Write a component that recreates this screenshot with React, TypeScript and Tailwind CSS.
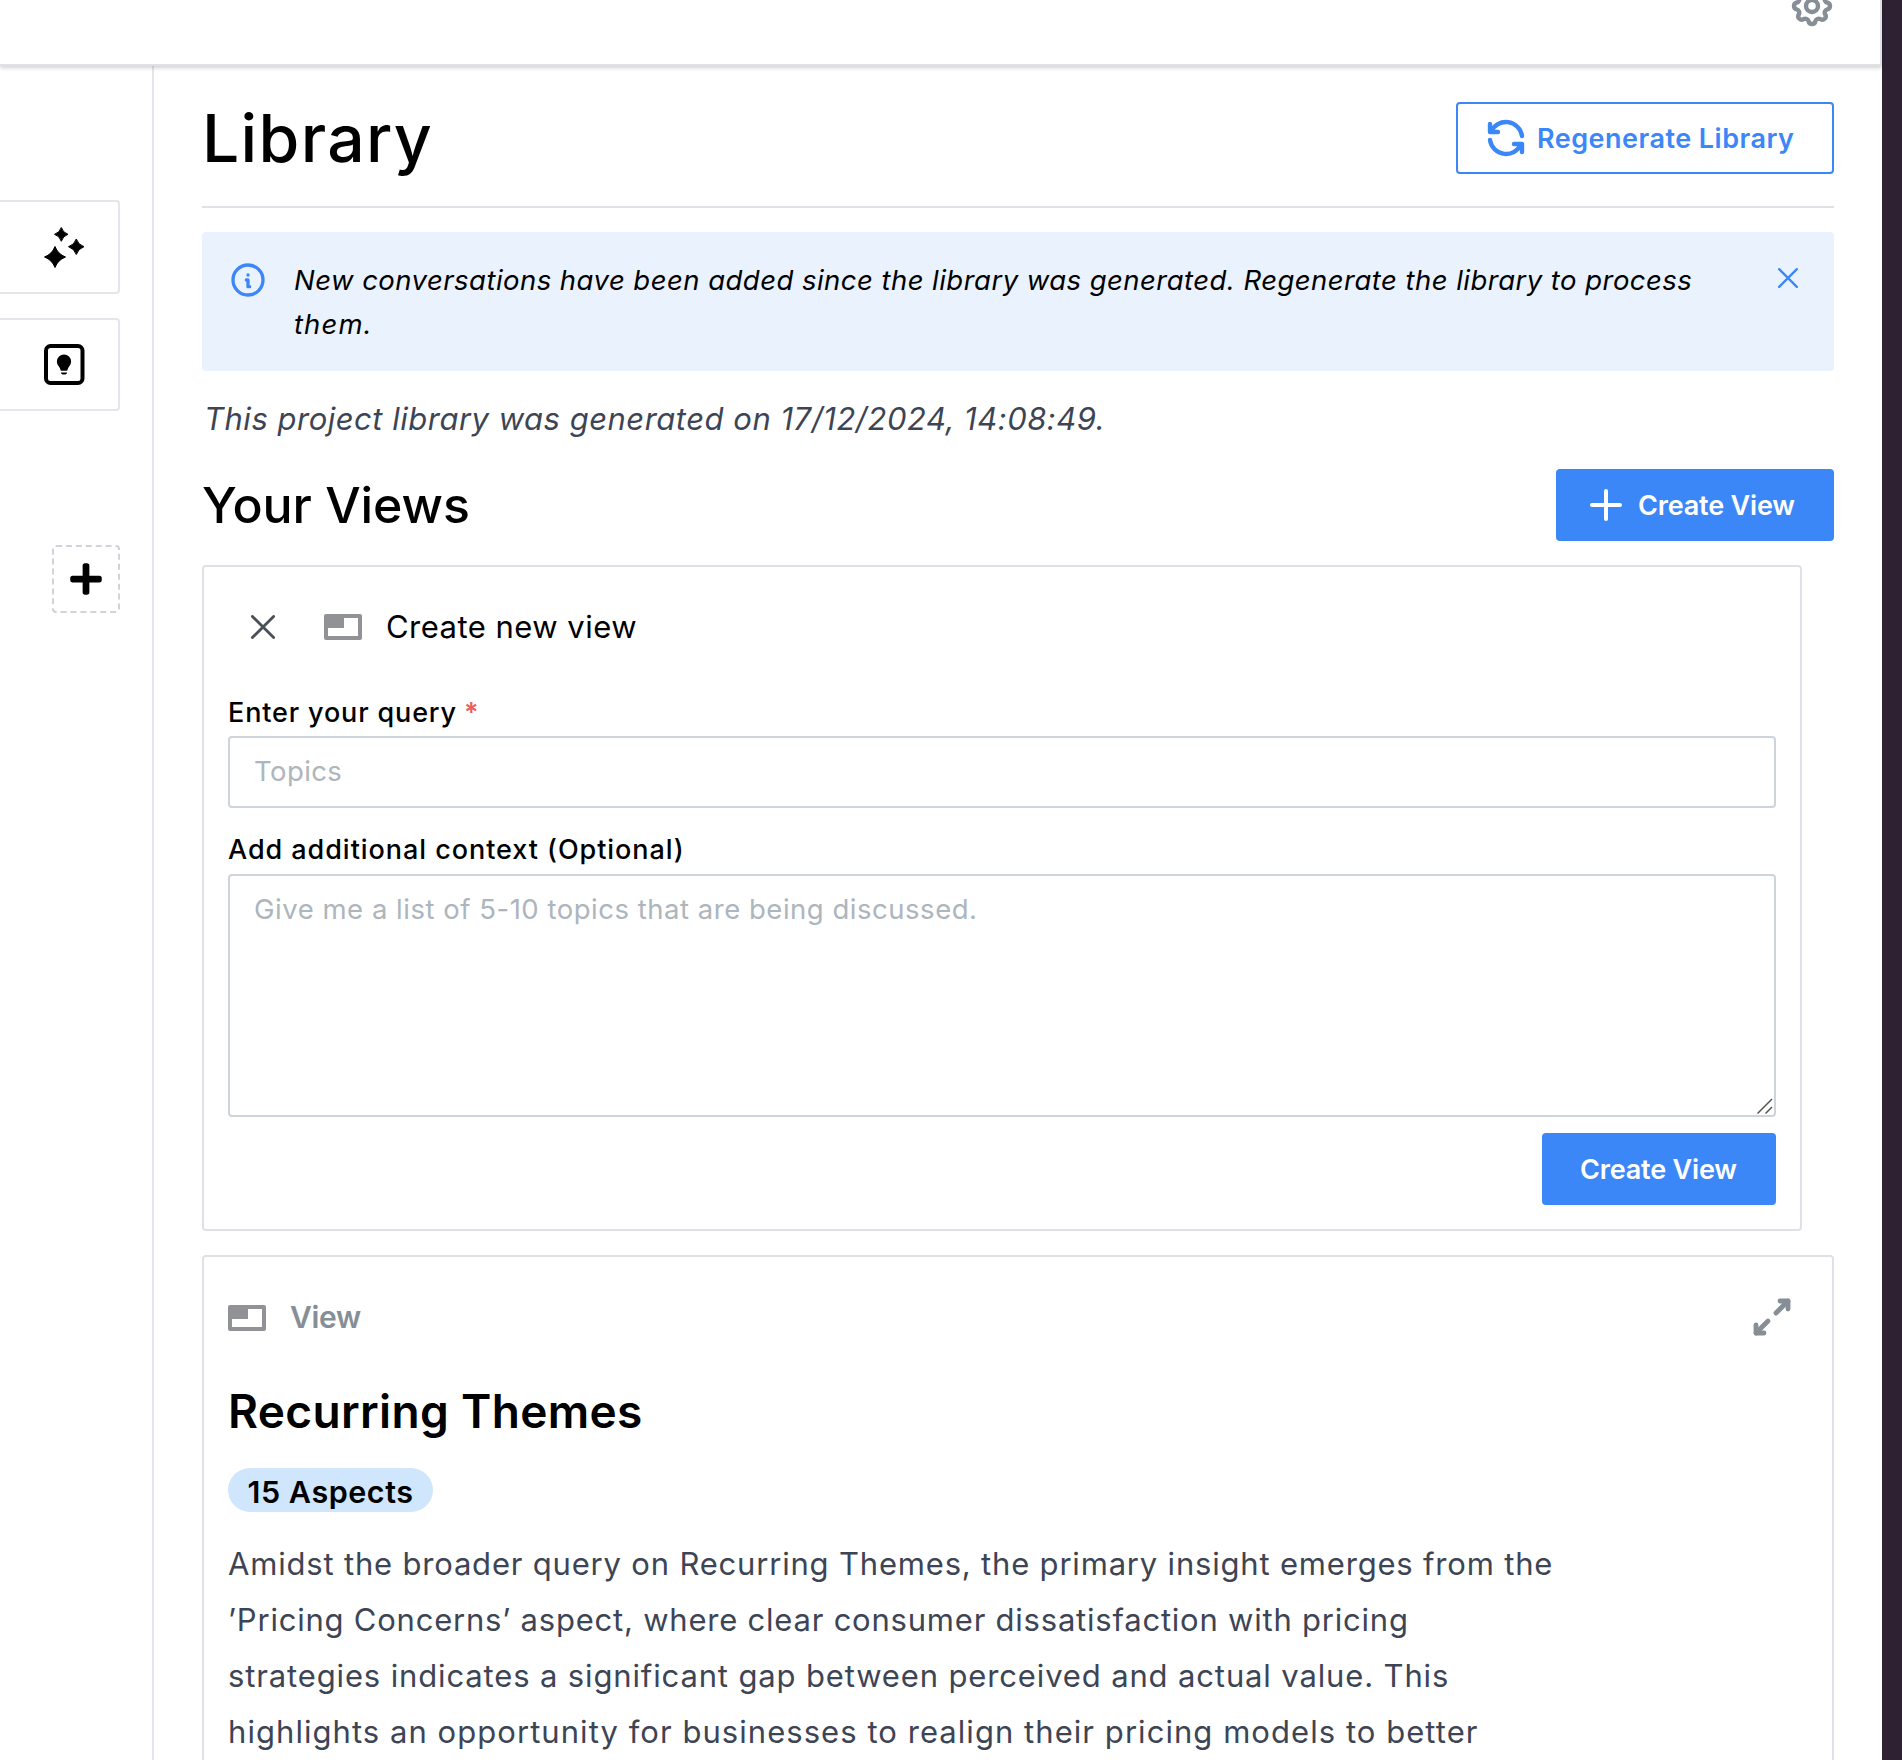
import type { ReactNode } from "react";
import { Plus } from "lucide-react";
import { FaPlus } from "react-icons/fa";
import { TbArrowsDiagonal, TbInfoCircle, TbRefresh, TbSettings } from "react-icons/tb";

function SparklesIcon() {
  return (
    <svg width="41" height="42" viewBox="0 0 41 42" fill="currentColor" stroke="currentColor" strokeWidth="1" strokeLinejoin="round" className="mt-px">
      <path d="M17.3 0.5Q18.9 5.700 24 7.300Q18.900 8.900 17.300 14.300Q15.700 8.900 10.500 7.300Q15.700 5.700 17.300 0.500Z" />
      <path d="M32.300 12Q34.200 17.800 40 19.700Q34.200 21.600 32.300 27.500Q30.400 21.600 24.500 19.700Q30.400 17.800 32.300 12Z" />
      <path d="M11 19.500Q13.900 27.100 21.500 30Q13.900 32.900 11 40.500Q8.100 32.900 0.500 30Q8.100 27.100 11 19.500Z" />
    </svg>
  );
}

function InsightIcon() {
  return (
    <svg width="41" height="41" viewBox="0 0 41 41" className="-mt-px">
      <rect x="2" y="2" width="36.5" height="37" rx="4.5" fill="none" stroke="currentColor" strokeWidth="4" />
      <path
        d="M20 10.400a7.100 7.100 0 0 1 7.100 7.100c0 3.200-1.900 4.600-2.900 6.400-.5 1-.6 2.900-1.600 2.900h-5.200c-1 0-1.100-1.900-1.600-2.900-1-1.800-2.900-3.200-2.900-6.400a7.100 7.100 0 0 1 7.100-7.100z"
        fill="currentColor"
      />
      <path d="M17 28.500h6a3 2 0 0 1-6 0z" fill="currentColor" />
    </svg>
  );
}

function ViewIcon() {
  return (
    <svg width="38" height="26" viewBox="0 0 38 26" className="shrink-0">
      <path d="M2 0h34a2 2 0 0 1 2 2v22a2 2 0 0 1-2 2H2a2 2 0 0 1-2-2V2a2 2 0 0 1 2-2zM20 4v10H4v8h30V4z" fill="#909296" fillRule="evenodd" />
    </svg>
  );
}

function CloseIcon({ size, stroke }: { size: number; stroke: number }) {
  const near = stroke / 2;
  const far = size - near;
  return (
    <svg width={size} height={size} viewBox={`0 0 ${size} ${size}`} stroke="currentColor" strokeWidth={stroke} strokeLinecap="round">
      <path d={`M${near} ${near}L${far} ${far}M${far} ${near}L${near} ${far}`} />
    </svg>
  );
}

function Label({ children, className }: { children: ReactNode; className: string }) {
  return <label className={`flex h-11 items-center whitespace-pre text-[27px] font-medium leading-none ${className}`}>{children}</label>;
}

function Sidebar() {
  return (
    <aside className="w-[154px] shrink-0 border-r-2 border-[#e5e5eb] pt-[134px]">
      <div className="flex h-[94px] w-[120px] items-center rounded-r border-2 border-l-0 border-[#e5e5eb] pl-11">
        <SparklesIcon />
      </div>
      <div className="mt-6 flex h-[93px] w-[120px] items-center rounded-r border-2 border-l-0 border-[#e5e5eb] pl-11">
        <InsightIcon />
      </div>
      <button className="ml-[52px] mt-[134px] flex size-[68px] items-center justify-center rounded border-2 border-dashed border-[#ced4da]">
        <FaPlus size={36} />
      </button>
    </aside>
  );
}

function CreateForm() {
  return (
    <section className="mt-6 h-[666px] w-[1600px] rounded border-2 border-[#dee2e6] px-6 pt-6">
      <div className="flex h-[71px] items-center pl-[23px]">
        <span className="text-[#495057]">
          <CloseIcon size={24} stroke={2.8} />
        </span>
        <span className="ml-[49px]">
          <ViewIcon />
        </span>
        <h3 className="ml-6 text-[31px] leading-none tracking-[0.47px]">Create new view</h3>
      </div>
      <Label className="mt-[28px] tracking-[0.85px]">
        Enter your query<span className="ml-[7px] font-semibold text-[#e8615a]">*</span>
      </Label>
      <div className="mt-0.5 flex h-[72px] items-center rounded border-2 border-[#ced4da] px-6 text-[27.5px] leading-none tracking-[0.4px] text-[#adb5bd]">
        Topics
      </div>
      <Label className="mt-[19px] tracking-[0.95px]">Add additional context (Optional)</Label>
      <div className="relative mt-[3px] h-[243px] rounded border-2 border-[#ced4da] px-6 pt-[11px] text-[27.5px] leading-[44px] tracking-[0.52px] text-[#adb5bd]">
        Give me a list of 5-10 topics that are being discussed.
        <svg width="16" height="16" viewBox="0 0 16 16" className="absolute bottom-px right-[1px]" stroke="#555" strokeWidth="1.5">
          <path d="M0.5 15.5L15 1M8.5 15.5L15 9" />
        </svg>
      </div>
      <div className="mt-4 flex justify-end">
        <button className="flex h-[72px] w-[234px] items-center rounded bg-[#3b87f8] pl-[38px] text-[27px] font-semibold leading-none tracking-[-0.17px] text-white">
          Create View
        </button>
      </div>
    </section>
  );
}

function ViewCard() {
  return (
    <section className="mt-6 h-[600px] rounded border-2 border-[#dee2e6] px-6 pt-6">
      <div className="flex h-[72px] items-center text-[#868e96]">
        <span className="mt-0.5">
          <ViewIcon />
        </span>
        <span className="ml-6 text-[30px] font-semibold leading-none tracking-[-0.3px]">View</span>
        <TbArrowsDiagonal size={48} strokeWidth={2.4} className="ml-auto mr-3" />
      </div>
      <h2 className="mt-[26px] text-[46px] font-semibold leading-[64px] tracking-[0.34px]">Recurring Themes</h2>
      <div className="mt-[25px] flex h-11 w-[205px] items-center justify-center rounded-full bg-[#d0e6fd] pt-1 text-[30.5px] font-semibold leading-none tracking-[0.55px]">
        15 Aspects
      </div>
      <p className="mt-[23.5px] whitespace-nowrap text-[31px] leading-[56px] text-[#3d4555]">
        <span className="block tracking-[0.81px]">Amidst the broader query on Recurring Themes, the primary insight emerges from the</span>
        <span className="block tracking-[0.78px]">’Pricing Concerns’ aspect, where clear consumer dissatisfaction with pricing</span>
        <span className="block tracking-[0.86px]">strategies indicates a significant gap between perceived and actual value. This</span>
        <span className="block tracking-[1.05px]">highlights an opportunity for businesses to realign their pricing models to better</span>
      </p>
    </section>
  );
}

export default function App() {
  return (
    <div className="flex h-[1760px] w-[1902px] overflow-hidden bg-[#2e2232] font-['Inter',sans-serif] text-black">
      <div className="flex w-[1882px] shrink-0 flex-col bg-white">
        <header className="z-10 flex h-[66px] shrink-0 justify-end border-b-2 border-r-2 border-[#dee2e6] bg-white pr-11 shadow-[0_2px_4px_rgba(0,0,0,0.18)]">
          <TbSettings size={48} strokeWidth={2.2} className="-mt-[18px] text-[#868e96]" />
        </header>
        <div className="flex min-h-0 flex-1">
          <Sidebar />
          <main className="min-w-0 flex-1 overflow-hidden px-12 pt-9">
            <div className="flex h-[72px] items-center justify-between">
              <h1 className="text-[66px] font-medium leading-none tracking-[1.3px]">Library</h1>
              <button className="flex h-[72px] w-[378px] items-center gap-[7px] whitespace-nowrap rounded border-2 border-[#3b87f8] pl-6 text-[27px] font-semibold leading-none tracking-[0.48px] text-[#3b87f8]">
                <TbRefresh size={48} strokeWidth={2.2} className="shrink-0" />
                Regenerate Library
              </button>
            </div>
            <div className="mt-8 h-0.5 bg-[#dee2e6]" />
            <div className="mt-6 flex h-[139px] items-start rounded bg-[#eaf2fe] pl-[26px]">
              <TbInfoCircle size={40} className="mt-7 shrink-0 text-[#3b87f8]" />
              <p className="ml-[26px] mt-[26px] whitespace-nowrap text-[27.5px] italic leading-[44px] tracking-[0.46px]">
                New conversations have been added since the library was generated. Regenerate the library to process
                <br />
                <span className="tracking-[1.1px]">them.</span>
              </p>
              <span className="ml-auto mr-9 mt-9 text-[#3b87f8]">
                <CloseIcon size={20} stroke={2.3} />
              </span>
            </div>
            <p className="ml-0.5 mt-[23px] h-[50px] text-[31px] italic leading-[50px] tracking-[0.5px] text-[#3d4555]">
              This project library was generated on 17/12/2024, 14:08:49.
            </p>
            <div className="mt-[25px] flex h-[72px] items-center justify-between">
              <h2 className="text-[50px] font-medium leading-none tracking-[-0.05px]">Your Views</h2>
              <button className="flex h-[72px] w-[278px] items-center gap-2 rounded bg-[#3b87f8] pl-[26px] text-[27px] font-semibold leading-none tracking-[-0.17px] text-white">
                <Plus size={48} />
                Create View
              </button>
            </div>
            <CreateForm />
            <ViewCard />
          </main>
        </div>
      </div>
    </div>
  );
}
